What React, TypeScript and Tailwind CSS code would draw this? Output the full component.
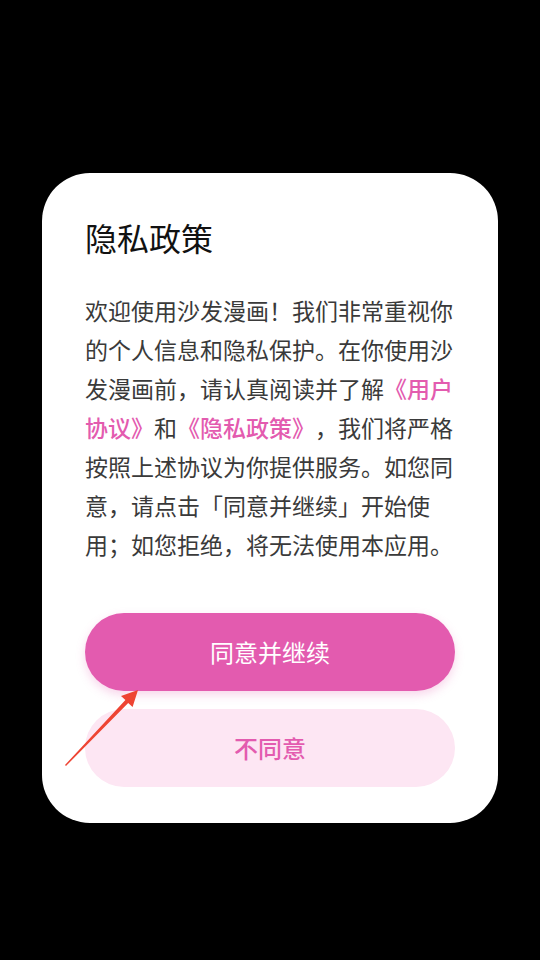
export default function App() {
  const font = { fontFamily: '"Noto Sans CJK SC", "Noto Sans", sans-serif' };
  return (
    <div className="relative flex h-[960px] w-[540px] items-start justify-center bg-black pt-[173px]" style={font}>
      <div className="flex w-[456px] flex-col rounded-[48px] bg-white px-[43px] pb-[36px] pt-[40px]">
        <h1 className="text-[32px] leading-[48px] text-[#111]">隐私政策</h1>
        <p className="mt-[30px] text-[23px] leading-[39px] text-[#3a3a3a] [text-spacing-trim:space-all]">
          欢迎使用沙发漫画！我们非常重视你的个人信息和隐私保护。在你使用沙发漫画前，请认真阅读并了解
          <span className="font-medium text-[#e35baf]">《用户协议》</span>和
          <span className="font-medium text-[#e35baf]">《隐私政策》</span>
          ，我们将严格按照上述协议为你提供服务。如您同意，请点击「同意并继续」开始使用；如您拒绝，将无法使用本应用。
        </p>
        <button className="mt-[49px] h-[78px] w-full rounded-full bg-[#e35baf] text-[24px] text-white shadow-[0_4px_10px_rgba(227,91,175,0.25)]">
          同意并继续
        </button>
        <button className="mt-[18px] h-[78px] w-full rounded-full bg-[#fde6f3] text-[24px] font-medium text-[#e35baf]">
          不同意
        </button>
      </div>
      <svg className="absolute left-0 top-0" width="540" height="960" viewBox="0 0 540 960">
        <polygon
          points="138,690 132.6,707.1 128.2,702.9 66,766 65,765 125.4,700.1 121,696"
          fill="#ee4433"
        />
      </svg>
    </div>
  );
}
